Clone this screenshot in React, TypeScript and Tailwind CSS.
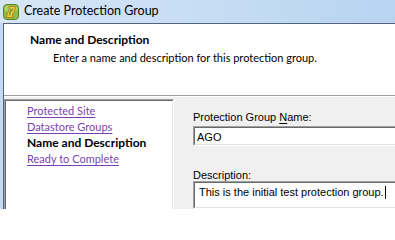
import React from "react";

const ui = { fontFamily: 'Lato, "Open Sans", sans-serif' };
const classic = { fontFamily: '"Liberation Sans", Arial, sans-serif' };

function SrmIcon() {
  return (
    <svg width="16" height="16" viewBox="0 0 16 16" aria-hidden="true">
      <rect x="0.5" y="0.5" width="15" height="15" rx="3.5" fill="#8dbb43" stroke="#55842a" />
      <rect x="1.5" y="1.5" width="13" height="6" rx="2.5" fill="#b8dc74" opacity="0.7" />
      <path d="M6 2.5 H12.5 L11.5 7.5 L10 8.5 L9.5 13.5 H3.5 L4.5 8.5 L6 7.5 Z" fill="#f3cb3a" stroke="#a8731a" strokeWidth="0.8" />
      <path d="M7 4.5 H10.5 L9.5 7 L8 8 L7.6 11.5 H5.6 L6.3 8 L7 7 Z" fill="#7aa83a" />
    </svg>
  );
}

function Sunken({ className, children }: { className?: string; children?: React.ReactNode }) {
  return (
    <div className={"border-t border-l border-t-[#a0a0a0] border-l-[#a0a0a0] border-r border-b border-r-white border-b-white " + (className ?? "")}>
      <div className="h-full border-t border-l border-t-[#696969] border-l-[#696969] border-r border-b border-r-[#e3e3e3] border-b-[#e3e3e3] bg-white">
        {children}
      </div>
    </div>
  );
}

const steps = [
  { label: "Protected Site", current: false },
  { label: "Datastore Groups", current: false },
  { label: "Name and Description", current: true },
  { label: "Ready to Complete", current: false },
];

export default function App() {
  return (
    <div className="flex h-[209px] w-[395px] flex-col overflow-hidden bg-[#f0f0f0]" style={ui}>
      {/* Title bar */}
      <div className="flex h-[23px] shrink-0 items-center gap-[5px] bg-gradient-to-r from-[#d6e6f6] to-[#b8d4f1] pl-[3px]">
        <SrmIcon />
        <span className="text-[12.5px] leading-none text-black">Create Protection Group</span>
      </div>

      <div className="flex min-h-0 flex-1">
        <div className="w-[3px] shrink-0 bg-[#c4daf1]" />
        <div className="flex min-w-0 flex-1 flex-col border-l border-t border-[#53647a]">
          {/* Header */}
          <div className="h-[71px] shrink-0 bg-white pl-[26px] pt-[8px]">
            <div className="text-[12px] leading-[16px] font-bold text-black">Name and Description</div>
            <div className="pl-[23px] pt-[2px] text-[11px] leading-[16px] text-black">
              Enter a name and description for this protection group.
            </div>
          </div>
          <div className="h-px shrink-0 bg-[#a0a0a0]" />
          <div className="h-px shrink-0 bg-white" />

          {/* Body */}
          <div className="flex min-h-0 flex-1 pt-[2px]">
            <Sunken className="h-[120px] w-[170px] shrink-0">
              <ul className="flex flex-col pl-[21px] pt-[2px] text-[11px] leading-[16px]">
                {steps.map((s) =>
                  s.current ? (
                    <li key={s.label} className="text-[12px] font-bold text-black">
                      {s.label}
                    </li>
                  ) : (
                    <li key={s.label} className="text-[#7b3fb3] underline underline-offset-[2px]">
                      {s.label}
                    </li>
                  )
                )}
              </ul>
            </Sunken>

            <div className="flex min-w-0 flex-1 flex-col pl-[19px] pt-[10px] text-[11px] text-black" style={classic}>
              <div className="leading-[16px]">
                Protection Group <span className="underline underline-offset-[2px]">N</span>ame:
              </div>
              <Sunken className="mt-[1px] h-[20px] w-[260px]">
                <div className="pl-[2px] pt-[2px] leading-[14px]">AGO</div>
              </Sunken>
              <div className="mt-[21px] leading-[16px]">
                <span className="underline underline-offset-[2px]">D</span>escription:
              </div>
              <Sunken className="mt-[-2px] h-[60px] w-[260px]">
                <div className="flex items-center pl-[4px] pt-[2px] leading-[14px]">
                  This is the initial test protection group.
                  <span className="ml-[1px] inline-block h-[13px] w-px bg-black" />
                </div>
              </Sunken>
            </div>
          </div>
        </div>
      </div>
    </div>
  );
}
